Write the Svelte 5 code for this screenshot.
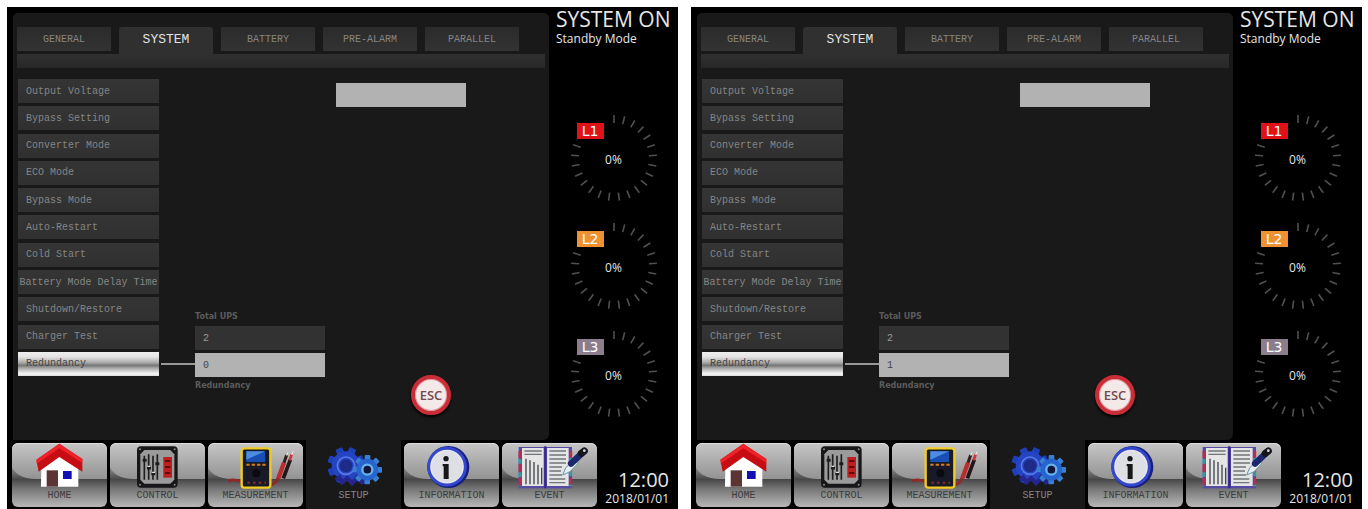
<script>
    const tabs = ['GENERAL', 'SYSTEM', 'BATTERY', 'PRE-ALARM', 'PARALLEL'];

    const menu = [
        'Output Voltage',
        'Bypass Setting',
        'Converter Mode',
        'ECO Mode',
        'Bypass Mode',
        'Auto-Restart',
        'Cold Start',
        'Battery Mode Delay Time',
        'Shutdown/Restore',
        'Charger Test',
        'Redundancy'
    ];

    const phases = ['L1', 'L2', 'L3'];
    const nav = ['HOME', 'CONTROL', 'MEASUREMENT', 'SETUP', 'INFORMATION', 'EVENT'];

    const screens = [
        { id: 'a', total: '2', redundancy: '0' },
        { id: 'b', total: '2', redundancy: '1' }
    ];

    // 25 positions round the dial, the last four are left out for the badge
    const ticks = Array.from({ length: 21 }, (_, i) => i * 14.4);
    const teeth = Array.from({ length: 8 }, (_, i) => i * 45);
</script>

{#snippet icon(name)}
    <svg class="icon" viewBox="0 0 285 138" aria-hidden="true">
        {#if name === 'HOME'}
            <path d="M88 74 L142 28 L199 74 V131 H87 Z" fill="#fff" />
            <path d="M142 2 L211 48 V86 L142 42 L80 86 L73 50 Z" fill="#c60d14" />
            <path d="M142 2 L211 48 V60 L142 16 L74 62 V50 Z" fill="#ee2228" />
            <rect x="104" y="82" width="34" height="49" fill="#5d3434" />
            <rect x="153" y="84" width="26" height="24" fill="#1210b4" />
        {:else if name === 'CONTROL'}
            <rect x="81" y="10" width="122" height="124" rx="12" fill="#17171a" />
            <path d="M103 21 H181 L193 34 V110 L181 122 H103 L91 110 V34 Z" fill="#9b9b9b" />
            <path d="M103 38 V110 M116 34 V110 M129 38 V110 M142 34 V110" stroke="#1d1d1d" stroke-width="5" />
            <path d="M98 52 H110 M111 75 H123 M124 92 H136 M136 62 H148" stroke="#1d1d1d" stroke-width="9" />
            <path d="M112 70 H121 M125 88 H135" stroke="#ddd" stroke-width="4" />
            <rect x="160" y="42" width="26" height="62" fill="#bb1f1f" />
            <path d="M165 54 H181 M165 72 H181 M165 90 H181" stroke="#5e0b0b" stroke-width="6" />
            <circle cx="90" cy="19" r="3" fill="#888" />
            <circle cx="194" cy="19" r="3" fill="#888" />
            <circle cx="90" cy="125" r="3" fill="#888" />
            <circle cx="194" cy="125" r="3" fill="#888" />
        {:else if name === 'MEASUREMENT'}
            <path d="M60 114 Q80 106 105 118 M185 128 Q208 118 210 104" fill="none" stroke="#8c2b2b" stroke-width="9" />
            <rect x="101" y="16" width="86" height="118" rx="8" fill="#181b27" stroke="#f2cc23" stroke-width="7" />
            <rect x="115" y="25" width="56" height="32" fill="#174fb4" />
            <path d="M115 25 H171 L115 50 Z" fill="#4e8ce0" />
            <path d="M115 65 H175" stroke="#d47c25" stroke-width="6" stroke-dasharray="10 6" />
            <circle cx="145" cy="91" r="12" fill="#090b10" />
            <path d="M118 119 H174" stroke="#8e2526" stroke-width="6" stroke-dasharray="8 9" />
            <path d="M211 106 L228 59" stroke="#ba2c2d" stroke-width="13" />
            <path d="M226 106 L247 50" stroke="#24171a" stroke-width="11" />
            <path d="M228 59 L236 36" stroke="#331c1e" stroke-width="9" />
            <path d="M245 52 L251 34" stroke="#cc3236" stroke-width="8" />
            <path d="M236 38 L240 28 M251 36 L256 25" stroke="#eee" stroke-width="3" />
        {:else if name === 'SETUP'}
            <g transform="translate(10 -3)">
                <g fill="#1f3fb8">
                    {#each teeth as angle}
                        <rect x="99" y="15" width="22" height="26" rx="4" transform="rotate({angle + 22} 110 71)" />
                    {/each}
                </g>
                <circle cx="110" cy="71" r="31" fill="#1d2a86" stroke="#2444c4" stroke-width="24" />
                <circle cx="110" cy="71" r="26" fill="none" stroke="#5b78e2" stroke-width="5" />
                <path d="M80 115 L90 106 L99 121 L114 108 L128 124 L145 108 L158 121 L172 112" fill="none" stroke="#25258d" stroke-width="12" />
                <g fill="#3a7fd0">
                    {#each teeth as angle}
                        <rect x="166" y="39" width="17" height="22" rx="3" transform="rotate({angle} 174 83)" />
                    {/each}
                </g>
                <circle cx="174" cy="83" r="24" fill="#191e65" stroke="#2864ce" stroke-width="17" />
                <circle cx="174" cy="83" r="15" fill="#14143c" stroke="#65b4e9" stroke-width="7" />
            </g>
        {:else if name === 'INFORMATION'}
            <circle cx="133" cy="72" r="63" fill="#17207e" />
            <circle cx="129" cy="71" r="55" fill="#e7e7ed" stroke="#3448cd" stroke-width="9" />
            <circle cx="129" cy="71" r="46" fill="#dedee5" />
            <circle cx="126" cy="47" r="8" fill="#171717" />
            <path d="M116 63 H134 V108 H119 V70 H116 Z" fill="#171717" />
        {:else}
            <rect x="50" y="12" width="160" height="124" fill="#584ba2" />
            <path d="M54 24 V130 M206 24 V130" stroke="#b52d50" stroke-width="9" stroke-dasharray="22 18" />
            <path d="M54 48 V130 M206 45 V130" stroke="#3a9a9b" stroke-width="9" stroke-dasharray="14 26" />
            <path d="M60 15 H125 V129 H60 Z M135 15 H200 V129 H135 Z" fill="#e5e5e5" />
            <path d="M67 24 H119 M67 34 H119 M142 24 H192 M142 36 H192 M142 48 H192 M142 60 H192 M142 72 H180 M142 84 H177 M142 96 H180 M142 108 H190 M142 119 H190" stroke="#717579" stroke-width="4" />
            <path d="M72 47 V124 M84 52 V124 M96 57 V124 M108 65 V124 M119 74 V124" stroke="#40444c" stroke-width="4" />
            <path d="M130 10 V136" stroke="#33258e" stroke-width="6" />
            <path d="M182 96 L191 75 L214 50 L227 62 L204 86 Z" fill="#e8eef2" stroke="#629ba4" stroke-width="3" />
            <path d="M207 62 L246 25" stroke="#1b286f" stroke-width="19" stroke-linecap="round" />
            <path d="M238 31 L247 24" stroke="#15151b" stroke-width="21" stroke-linecap="round" />
            <circle cx="247" cy="23" r="4" fill="#ddd" />
        {/if}
    </svg>
{/snippet}

<main>
    {#each screens as screen}
        <section class="screen">
            <div class="upper">
                <div class="panel">
                    <div class="tabs">
                        {#each tabs as tab}
                            <button class="tab" class:active={tab === 'SYSTEM'}>{tab}</button>
                        {/each}
                    </div>
                    <div class="strip"></div>

                    <div class="settings">
                        <div class="menu">
                            {#each menu as item}
                                <button
                                    class="item"
                                    class:wide={item.length > 20}
                                    class:selected={item === 'Redundancy'}>{item}</button
                                >
                            {/each}
                        </div>
                        <div class="connector"></div>
                        <div class="fields">
                            <label for="total-{screen.id}">Total UPS</label>
                            <input id="total-{screen.id}" type="text" value={screen.total} />
                            <input class="light" id="redundancy-{screen.id}" type="text" value={screen.redundancy} />
                            <label for="redundancy-{screen.id}">Redundancy</label>
                        </div>
                        <div class="entry">
                            <input class="light" type="text" aria-label="New value" />
                            <button class="esc">ESC</button>
                        </div>
                    </div>
                </div>

                <aside class="side">
                    <h1>SYSTEM ON</h1>
                    <p>Standby Mode</p>
                    <div class="gauges">
                        {#each phases as phase}
                            <div class="gauge">
                                <svg viewBox="0 0 88 88" aria-hidden="true">
                                    {#each ticks as angle}
                                        <path d="M44 1 V9" transform="rotate({angle} 44 44)" />
                                    {/each}
                                </svg>
                                <span class="badge {phase.toLowerCase()}">{phase}</span>
                                <span class="percent">0%</span>
                            </div>
                        {/each}
                    </div>
                </aside>
            </div>

            <div class="lower">
                <nav>
                    {#each nav as name}
                        <button class="nav-button" class:current={name === 'SETUP'}>
                            {@render icon(name)}
                            <span>{name}</span>
                        </button>
                    {/each}
                </nav>
                <div class="clock">
                    <time class="hour">12:00</time>
                    <time class="date">2018/01/01</time>
                </div>
            </div>
        </section>
    {/each}
</main>

<style>
    :global(body) {
        background: #fff;
    }

    main {
        display: flex;
        gap: 13px;
        padding: 7px 6px 0 7px;
    }

    button,
    input {
        box-sizing: border-box;
        margin: 0;
        border: 0;
        border-radius: 0;
        font-family: "Liberation Mono", monospace;
        font-size: 10px;
    }

    .screen {
        flex: 1;
        min-width: 0;
        background: #000;
        color: #e6e6e6;
        font-family: "Open Sans", sans-serif;
    }

    .upper {
        display: flex;
        padding: 6px 0 0 6px;
    }

    .panel {
        flex: 1;
        box-sizing: border-box;
        padding: 14px 4px 25px;
        background: #191919;
        border-radius: 5px 5px 6px 0;
    }

    .tabs {
        display: flex;
        gap: 8px;
        height: 27px;
    }

    .tab {
        width: 94px;
        height: 24px;
        padding: 0;
        background: linear-gradient(#2b2b2b, #333);
        color: #858585;
    }

    .tab.active {
        height: 27px;
        padding-bottom: 3px;
        border-radius: 3px 3px 0 0;
        background: #303030;
        color: #e2e2e2;
        font-size: 13px;
    }

    .strip {
        height: 14px;
        background: linear-gradient(#303030, #282828);
    }

    .settings {
        display: flex;
        padding: 11px 0 0 1px;
    }

    .menu {
        display: flex;
        flex-direction: column;
        justify-content: space-between;
        width: 141px;
        height: 297px;
    }

    .item {
        height: 24px;
        padding: 0 0 0 8px;
        background: linear-gradient(#353535, #303030);
        color: #858585;
        text-align: left;
        white-space: nowrap;
    }

    .item.wide {
        padding: 0;
        text-align: center;
    }

    .item.selected {
        background: linear-gradient(#eee 0%, #e4e4e4 20%, #aaa 44%, #777 56%, #aaa 68%, #f4f4f4 90%, #ddd);
        color: #444;
    }

    .connector {
        width: 34px;
        height: 2px;
        margin: 284px 0 0 2px;
        background: #989898;
    }

    .fields {
        display: flex;
        flex-direction: column;
        gap: 3px;
        width: 130px;
        padding-top: 232px;
    }

    .fields label {
        height: 12px;
        font: bold 8px/12px "DejaVu Sans", sans-serif;
        color: #5c5c5c;
    }

    input {
        width: 130px;
        height: 24px;
        padding: 0 8px;
        background: #323232;
        color: #999;
    }

    .light {
        background: #b2b2b2;
        color: #444;
    }

    .entry {
        display: flex;
        flex-direction: column;
        align-items: flex-end;
        justify-content: space-between;
        width: 130px;
        height: 336px;
        margin-left: 11px;
        padding-top: 4px;
        box-sizing: border-box;
    }

    .esc {
        width: 40px;
        height: 40px;
        margin-right: 15px;
        padding: 0;
        border: 4px solid #c92d38;
        border-radius: 50%;
        background: #f3e9e9;
        box-shadow: inset 0 0 0 1px #e89b9f, 0 2px 3px #000;
        color: #75494c;
        font: 600 13px "Open Sans", sans-serif;
    }

    .side {
        flex: none;
        width: 129px;
    }

    h1 {
        margin: -6px 0 0 7px;
        font-size: 21px;
        line-height: 24px;
        font-weight: 400;
        white-space: nowrap;
    }

    p {
        margin: 0 0 0 7px;
        font-size: 12px;
        line-height: 16px;
        white-space: nowrap;
    }

    .gauges {
        display: flex;
        flex-direction: column;
        align-items: center;
        gap: 20px;
        margin-top: 67px;
    }

    .gauge {
        position: relative;
        display: grid;
        place-items: center;
        width: 88px;
        height: 88px;
    }

    .gauge svg {
        grid-area: 1 / 1;
        width: 88px;
        height: 88px;
    }

    .gauge path {
        stroke: #505050;
        stroke-width: 1.6;
    }

    .percent {
        grid-area: 1 / 1;
        padding-top: 3px;
        font-size: 12px;
        line-height: 16px;
    }

    .badge {
        position: absolute;
        top: 9px;
        left: 7px;
        width: 27px;
        height: 16px;
        color: #fff;
        font: 14px/16px "DejaVu Sans", sans-serif;
        text-align: center;
    }

    .l1 {
        background: #e01218;
    }

    .l2 {
        background: #ee9130;
    }

    .l3 {
        background: #8c7d8d;
    }

    .lower {
        display: flex;
        justify-content: space-between;
        padding-left: 5px;
    }

    nav {
        display: flex;
        gap: 3px;
    }

    .nav-button {
        position: relative;
        display: flex;
        flex-direction: column;
        align-items: center;
        width: 95px;
        height: 64px;
        margin: 3px 0;
        padding: 0;
        overflow: hidden;
        border-radius: 6px;
        background: linear-gradient(#d0d0d0, #aaa 30%, #484848 57%, #777 72%, #b8b8b8);
        color: #3d3d3d;
    }

    /* glossy upper half */
    .nav-button::before {
        content: "";
        position: absolute;
        inset: 0 0 28px;
        border-radius: 6px 6px 0 24px / 6px 6px 0 14px;
        background: linear-gradient(#c6c6c6, #939393);
        box-shadow: inset 0 1px #ddd;
    }

    .nav-button.current {
        height: 70px;
        margin: 0;
        padding-top: 3px;
        border-radius: 0;
        background: #191919;
        color: #858585;
    }

    .nav-button.current::before {
        content: none;
    }

    .icon {
        position: relative;
        width: 95px;
        height: 46px;
    }

    .nav-button span {
        position: relative;
        line-height: 14px;
    }

    .clock {
        display: flex;
        flex-direction: column;
        justify-content: flex-end;
        align-items: flex-end;
        padding: 0 9px 2px 0;
    }

    .hour {
        font-size: 20px;
        line-height: 20px;
    }

    .date {
        font-size: 12px;
        line-height: 18px;
    }
</style>
